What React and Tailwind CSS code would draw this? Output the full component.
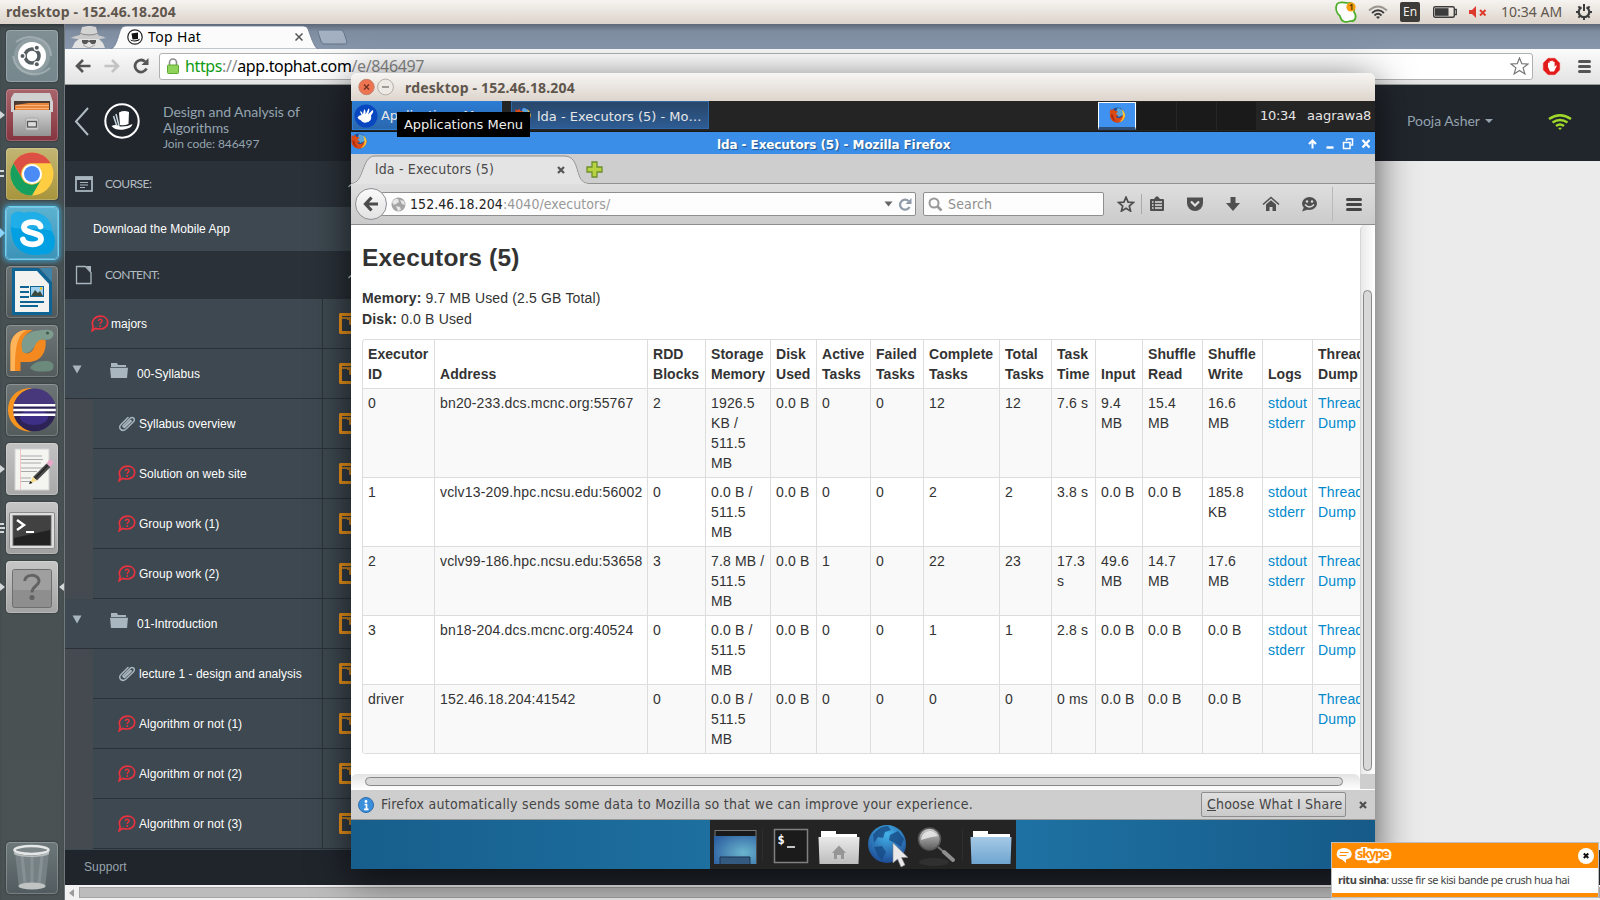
import React from "react";

/* ---------- Ubuntu top panel ---------- */
function TopPanel() {
  return (
    <div className="flex h-6 shrink-0 items-center bg-linear-to-b from-[#f6f4f1] to-[#dcd4cb] font-['Noto_Sans',sans-serif]">
      <div className="ml-[6px] w-[1326px] text-[14px] leading-6 font-bold tracking-[0.15px] whitespace-nowrap text-[#5f564d]">rdesktop - 152.46.18.204</div>
      <svg className="h-6 w-[32px] shrink-0" viewBox="0 0 32 24">
        <path d="M5 4 C8 1 12 3 16 3 C22 2 23 8 22 12 C25 16 24 22 18 21 C14 23 9 22 8 16 C4 13 3 8 5 4Z" fill="#fff" stroke="#4fae2a" strokeWidth="1.7" />
        <circle cx="19" cy="7" r="4.6" fill="#f79c0b" />
        <text x="17" y="10" fontSize="8" fontWeight="bold" fill="#5a3a00">1</text>
      </svg>
      <svg className="ml-[4px] h-6 w-[20px] shrink-0" viewBox="0 0 20 24" fill="none">
        <path d="M1 10.5 Q10 2.500 19 10.5" stroke="#9b9790" strokeWidth="1.800" />
        <path d="M4 13 Q10 7.500 16 13" stroke="#3c3c3c" strokeWidth="1.800" />
        <path d="M6.500 15.500 Q10 12 13.500 15.500" stroke="#3c3c3c" strokeWidth="1.800" />
        <path d="M8 17 Q10 15.500 12 17 L10 19Z" fill="#3c3c3c" />
      </svg>
      <div className="ml-[12px] h-5 w-5 shrink-0 rounded-[2px] bg-[#3c3b38] text-center text-[12px] leading-5 text-[#f3efea]">En</div>
      <svg className="ml-[13px] h-6 w-[24px] shrink-0" viewBox="0 0 24 24">
        <rect x="0.700" y="6.700" width="20.600" height="10.600" rx="1.500" fill="none" stroke="#3c3c3c" strokeWidth="1.400" />
        <rect x="2" y="8.200" width="13.500" height="7.600" fill="#3c3c3c" />
        <path d="M22 9.500h1.300v5H22" fill="none" stroke="#3c3c3c" strokeWidth="1.300" />
      </svg>
      <svg className="ml-[12px] h-6 w-[18px] shrink-0" viewBox="0 0 18 24">
        <path d="M0 10h3l4-4v12l-4-4H0z" fill="#dd3b2e" />
        <path d="M11 10l5.500 5.500M16.500 10L11 15.500" stroke="#dd3b2e" strokeWidth="2" />
      </svg>
      <div className="ml-[14px] w-[74px] shrink-0 text-[14px] leading-6 tracking-[0.02px] whitespace-nowrap text-[#5f564d]">10:34 AM</div>
      <svg className="h-6 w-[18px] shrink-0" viewBox="0 0 18 24" fill="none" stroke="#3c3c3c">
        <path d="M6.500 7.200A5.300 5.300 0 1 0 11.500 7.200" strokeWidth="2.200" />
        <path d="M9 4v7" strokeWidth="2" />
        <path d="M1 12h3M14 12h3M9 17v3M3.400 6.400l2 2M14.600 6.400l-2 2M3.400 17.600l2-2M14.600 17.600l-2-2" strokeWidth="2" />
      </svg>
    </div>
  );
}

/* ---------- Unity launcher ---------- */
function Tile({ className = "", children, left, right }) {
  return (
    <div className="relative flex w-[64px] shrink-0 pl-[6px]">
      {left === 1 && <svg className="absolute top-[21px] left-0 h-[10px] w-[5px]" viewBox="0 0 5 10"><path d="M0 1l5 4-5 4z" fill="#d3d7d7" /></svg>}
      {left === 2 && <svg className="absolute top-[21px] left-0 h-[10px] w-[5px]" viewBox="0 0 5 10"><path d="M0 2h4M0 7h4" stroke="#d3d7d7" strokeWidth="2" /></svg>}
      {left === 3 && <svg className="absolute top-[20px] left-0 h-[12px] w-[5px]" viewBox="0 0 5 12"><path d="M0 2h4M0 6h5M0 10h4" stroke="#d3d7d7" strokeWidth="2" /></svg>}
      {left === 4 && <svg className="absolute top-[20px] left-0 h-[12px] w-[5px]" viewBox="0 0 5 12"><path d="M0 1l5 5-5 5z" fill="#8bd4f7" /></svg>}
      <div className={"h-[52px] w-[52px] overflow-hidden rounded-[4px] " + className}>
        <svg className="h-[52px] w-[52px]" viewBox="0 0 52 52">
          {children}
          <rect x=".5" y=".5" width="51" height="51" rx="3.500" fill="none" stroke="#fff" strokeOpacity=".22" />
        </svg>
      </div>
      {right && <svg className="absolute top-[21px] right-0 h-[10px] w-[5px]" viewBox="0 0 5 10"><path d="M5 1L0 5l5 4z" fill="#d3d7d7" /></svg>}
    </div>
  );
}

function Launcher() {
  return (
    <div className="flex w-[65px] shrink-0 flex-col justify-between border-r border-[#70787b] bg-linear-to-b from-[#454f52] to-[#4b5254] pt-[6px] pb-[6px] shadow-[inset_0_4px_4px_-2px_rgba(0,0,0,0.35)]">
      <div className="flex flex-col gap-[7px]">
        <Tile className="bg-linear-to-b from-[#7f8f94] to-[#76888d] shadow-[0_0_2px_rgba(0,0,0,0.5)]">
          <circle cx="26" cy="26" r="18" fill="#a3b0b4" opacity=".5" />
          <path d="M10 12C24 2 44 8 45 26M44 38C30 50 10 44 7 26" stroke="#b5c0c3" strokeWidth="2" fill="none" opacity=".6" />
          <circle cx="26" cy="26" r="14" fill="#fff" />
          <circle cx="26" cy="26" r="7" fill="none" stroke="#555e61" strokeWidth="3.600" />
          <circle cx="16.500" cy="26" r="3.200" fill="#fff" /><circle cx="30.800" cy="17.800" r="3.200" fill="#fff" /><circle cx="30.800" cy="34.200" r="3.200" fill="#fff" />
          <circle cx="16.500" cy="26" r="2" fill="#555e61" /><circle cx="30.800" cy="17.800" r="2" fill="#555e61" /><circle cx="30.800" cy="34.200" r="2" fill="#555e61" />
        </Tile>
        <Tile left={1} className="bg-linear-to-b from-[#a9646b] to-[#85343f] shadow-[0_0_2px_rgba(0,0,0,0.5)]">
          <defs><linearGradient id="cab" x2="0" y2="1"><stop stopColor="#d2d2d2" /><stop offset="1" stopColor="#949494" /></linearGradient></defs>
          <path d="M8 4h36l3 9v10H5V9z" fill="#d0d0d0" />
          <path d="M8 12h36v10H8z" fill="#4a3a34" />
          <path d="M9 16l14-2h20v8H9z" fill="#e8843c" /><path d="M10 16.500h33M10 19.500h33" stroke="#fbc48a" strokeWidth=".8" />
          <rect x="7" y="21" width="38" height="26" rx="1" fill="url(#cab)" />
          <rect x="19.500" y="29" width="13" height="12" rx="2" fill="#cfcfcf" stroke="#a8a8a8" />
          <rect x="21.500" y="32.500" width="9" height="5.500" fill="#ddd" stroke="#555" strokeWidth="1.300" />
        </Tile>
        <Tile left={2} className="bg-linear-to-b from-[#c3b674] to-[#a8943a] shadow-[0_0_2px_rgba(0,0,0,0.5)]">
          <circle cx="26" cy="26" r="21.500" fill="#ffcd42" />
          <path d="M7.400 15.200A21.500 21.500 0 0 1 44.600 15.200H26A10.800 10.800 0 0 0 16.600 31.400z" fill="#dd5044" />
          <path d="M7.400 15.200A21.500 21.500 0 0 0 26 47.500L35.300 31.400A10.800 10.800 0 0 1 16.600 31.400z" fill="#17a05d" />
          <circle cx="26" cy="26" r="10" fill="#fff" /><circle cx="26" cy="26" r="8" fill="#4b8bf5" />
        </Tile>
        <Tile left={4} className="bg-linear-to-b from-[#5cb2d0] to-[#3b93b8] shadow-[0_0_0_1px_#6fd0f5,0_0_5px_3px_rgba(60,185,240,0.6)]">
          <path d="M5 13C4 5 12 3 18 6C33 2 46 11 46 24C52 34 48 49 38 47C22 51 7 43 6 28C4 22 5 17 5 13z" fill="#00a0e2" />
          <path d="M5 13C4 5 12 3 18 6C33 2 46 11 46 24C30 20 18 24 5 20z" fill="#3fbcf0" opacity=".5" />
          <path d="M34.500 19.500C33 13.500 18 13.500 18 20.500C18 27 35 24.500 35 32C35 39 19 39 17 32.500" fill="none" stroke="#fff" strokeWidth="5.800" strokeLinecap="round" />
        </Tile>
        <Tile className="bg-linear-to-b from-[#6a7274] to-[#50585a] shadow-[0_0_2px_rgba(0,0,0,0.5)]">
          <path d="M6 2h27l13 14v33H6z" fill="#0f6496" /><path d="M34 2h12v14z" fill="#3d83aa" />
          <path d="M9 5h22l12 13v28H9z" fill="#f2f2f0" />
          <path d="M14 21h9M14 26h9M14 31h9M14 36h24M14 40h18" stroke="#0f6496" strokeWidth="1.800" />
          <rect x="24.500" y="20.500" width="13" height="10" fill="#9fd0ee" stroke="#0f6496" /><path d="M25 30l4-6 3 3 2-2 3 5z" fill="#3a4a3c" /><circle cx="35" cy="22.500" r="1.200" fill="#f5c400" />
        </Tile>
        <Tile className="bg-linear-to-b from-[#6d7577] to-[#535b5d] shadow-[0_0_2px_rgba(0,0,0,0.5)]">
          <path d="M4.500 46V22C4.500 11 12 5 21 5H27C19 9 15 15 16 22C16 29 22 30 26 26C29 23 28 18 32 15.500C35 13.500 37 14 39.500 15C41 28 34 37 22 37H14.500V46z" fill="#f4891f" />
          <path d="M4.500 46V22C4.500 11 12 5 21 5C12 10 9 18 9 46z" fill="#ffb45a" />
          <path d="M16 24C14 13 21 6 33 5.500C40 4 47.500 4 47.500 9C47.500 14 42 15.500 37 14.500C28 14 30 27 20 28C17 28 16 27 16 24z" fill="#7d9c8d" />
          <circle cx="41.500" cy="8" r="1.600" fill="#465a50" />
          <path d="M24 43C27 38 31 36.500 38 36C45 35.500 48 38 47.500 42C47 46 43 46.500 37 46.500C31 46.500 27 46 24 43z" fill="#6b8a7c" />
        </Tile>
        <Tile className="bg-linear-to-b from-[#6d7577] to-[#535b5d] shadow-[0_0_2px_rgba(0,0,0,0.5)]">
          <path d="M26 4C10 4 2 14 2 26C2 38 12 48 25 47.500C13 43 8 35 8 26C8 16 14 7 26 4z" fill="#f7941e" />
          <circle cx="28.500" cy="26" r="21.300" fill="#2c2255" /><path d="M8 20A21.300 21.300 0 0 1 49 20z" fill="#4d3f85" opacity=".8" /><ellipse cx="28" cy="33" rx="14" ry="8" fill="#44349a" opacity=".7" />
          <path d="M7.700 21.200h41.600M7.200 26h42.600M7.700 30.800h41.600" stroke="#fff" strokeWidth="2.400" />
        </Tile>
        <Tile left={1} className="bg-linear-to-b from-[#c2c2c2] to-[#a8a8a8] shadow-[0_0_2px_rgba(0,0,0,0.5)]">
          <rect x="9" y="6" width="34" height="41" fill="#f4f4f1" stroke="#d2d2d2" />
          <path d="M14.500 6v41" stroke="#f0b0b0" strokeWidth=".7" />
          <path d="M15 13h21M15 16.500h22M15 20h20M15 25h22M15 28.500h16M15 35h10M15 38.500h9" stroke="#a9a9a9" strokeWidth="1.100" />
          <path d="M27 34L40.500 20.500L44.500 24L31 37.500z" fill="#4a4a4a" /><path d="M29 35.500L42 22" stroke="#222" strokeWidth="1.200" />
          <path d="M40.500 20.500l2.500-3.500q3.500-1 4.500 2.500l-3 4.500z" fill="#e9a6c8" /><path d="M27 34l4 3.500-7.500 3z" fill="#f1d985" /><path d="M23 41l1.300-3 2.200 2z" fill="#111" />
        </Tile>
        <Tile left={3} className="bg-linear-to-b from-[#c6c6c6] to-[#a0a0a0] shadow-[0_0_2px_rgba(0,0,0,0.5)]">
          <rect x="3.500" y="10.500" width="45" height="36" rx="1.500" fill="#dedede" stroke="#8a8a8a" />
          <rect x="7" y="13.500" width="38" height="30" fill="#222" stroke="#777" />
          <path d="M8 14h36v14L8 36z" fill="#4a4a4a" opacity=".8" />
          <path d="M11 18l7 5-7 5" fill="none" stroke="#fff" strokeWidth="2.400" /><path d="M20 30h8" stroke="#fff" strokeWidth="2.200" />
        </Tile>
        <Tile left={1} right className="bg-linear-to-b from-[#c6c6c6] to-[#a3a3a3] shadow-[0_0_2px_rgba(0,0,0,0.5)]">
          <rect x="6.500" y="8.500" width="39" height="38" rx="2" fill="#8e8e8e" stroke="#6e6e6e" />
          <path d="M7 9h38v20H7z" fill="#a6a6a6" opacity=".7" />
          <path d="M19 20C18 13 33 12 33 20C33 25 26 25 26 31.500" fill="none" stroke="#636363" strokeWidth="3" /><circle cx="26" cy="36.500" r="2.600" fill="#636363" />
        </Tile>
      </div>
      <Tile className="bg-linear-to-b from-[#6c777a] to-[#525c60] shadow-[0_0_2px_rgba(0,0,0,0.5)]">
        <path d="M9 10h34L39 46H13z" fill="#7f8a8d" opacity=".75" />
        <path d="M16 14l3 28M26 14v28M36 14l-3 28" stroke="#a7b0b2" strokeWidth="3" opacity=".35" />
        <ellipse cx="26" cy="44" rx="13.500" ry="3.500" fill="#bfc4c2" />
        <ellipse cx="25.500" cy="8" rx="17" ry="4" fill="#7c8587" stroke="#e5e7e6" strokeWidth="2.600" />
        <path d="M8 9c3 6 32 6 35 0v3c-4 4-31 4-35 0z" fill="#c5cac9" opacity=".8" />
      </Tile>
    </div>
  );
}

/* ---------- Chrome ---------- */
function ChromeTabs() {
  return (
    <div className="flex h-[25px] shrink-0 bg-linear-to-b from-[#5d6979] via-[#7f8da1] via-30% to-[#8897ab]">
      <svg className="ml-[5px] h-[25px] w-[38px] shrink-0" viewBox="0 0 38 25">
        <path d="M12 3l6-1h3l5 1 2 8H10z" fill="#d3d3d3" />
        <path d="M0.500 14Q19 6 36 14Q19 18 0.500 14z" fill="#c9c9c9" />
        <path d="M9 9Q19 13 29 9" stroke="#8b8b8b" fill="none" />
        <path d="M2 24L5 18 9 15h20l4 4 2 5z" fill="#e2e2e2" />
        <path d="M12 16h6l1 1 1-1h6v2c-1 3-5 3-6 0h-2c-1 3-5 3-6 0z" fill="#555" />
        <path d="M13 21l6 3 6-3" stroke="#a5a5a5" fill="none" />
      </svg>
      <div className="relative -ml-[1px] flex h-[25px] w-[211px] shrink-0 items-center">
        <svg className="absolute inset-0 h-[25px] w-[211px]" viewBox="0 0 211 25">
          <path d="M4 25C10 23 12 8 14 5Q15 2 19 2H196Q200 2 201 5C203 10 207 24 211 25z" fill="#fbfbfb" stroke="#68768a" strokeWidth=".8" />
        </svg>
        <svg className="relative ml-[20px] h-[16px] w-[16px] shrink-0" viewBox="0 0 16 16">
          <circle cx="8" cy="8" r="7.200" fill="#fff" stroke="#222" strokeWidth="1.200" /><path d="M4.500 4.500l6.500-1v6.500l-5.500.5zM3 10.500Q8 13 13 9.500L12 11.500Q8 13 4.500 12z" fill="#111" />
        </svg>
        <div className="relative ml-[5px] w-[147px] shrink-0 font-['Noto_Sans',sans-serif] text-[14px] leading-[25px] tracking-[0.35px] text-black">Top Hat</div>
        <svg className="relative h-2 w-2 shrink-0" viewBox="0 0 8 8"><path d="M.5 .5l7 7M7.500 .5l-7 7" stroke="#555" strokeWidth="1.500" /></svg>
      </div>
      <svg className="-ml-[3px] h-[25px] w-[34px] shrink-0" viewBox="0 0 34 25"><path d="M4 6h22q2 0 3 3l3 9q0 2-2 2H9q-2 0-3-3L3 8q0-2 1-2z" fill="#a2b0c2" stroke="#66758a" /></svg>
    </div>
  );
}

function ChromeToolbar() {
  return (
    <div className="flex h-[36px] shrink-0 items-center border-b border-[#9b9b9b] bg-linear-to-b from-[#fbfbfb] to-[#e3e3e3] pb-[1px]">
      <svg className="ml-[10px] h-4 w-[16px] shrink-0" viewBox="0 0 16 16" fill="none" stroke="#555" strokeWidth="2.600"><path d="M8 2L2 8l6 6M2 8h13.500" /></svg>
      <svg className="ml-[13px] h-4 w-[16px] shrink-0" viewBox="0 0 16 16" fill="none" stroke="#c3c3c3" strokeWidth="2.600"><path d="M8 2l6 6-6 6M14 8H.5" /></svg>
      <svg className="ml-[13px] h-4 w-[16px] shrink-0" viewBox="0 0 16 16" fill="none" stroke="#555" strokeWidth="2.800"><path d="M13.500 10.500A6 6 0 1 1 12 3.500" /><path d="M15.500 0v7h-7z" fill="#555" stroke="none" /></svg>
      <div className="ml-[10px] flex h-[27px] w-[1374px] shrink-0 items-center rounded-[3px] border border-[#b0b0b0] bg-white">
        <svg className="ml-[7px] h-[16px] w-[12px] shrink-0" viewBox="0 0 12 16"><path d="M2.500 8V4.500a3.500 3.500 0 0 1 7 0V8" fill="none" stroke="#8b8b8b" strokeWidth="1.600" /><rect x=".5" y="7" width="11" height="8.500" rx="1" fill="#8fd35a" stroke="#5fa834" /></svg>
        <div className="ml-[6px] w-[1325px] font-['Noto_Sans',sans-serif] text-[16px] leading-6 tracking-[-0.37px] whitespace-nowrap text-[#8a8a8a]"><span className="text-[#0f9a13]">https</span>://<span className="text-black">app.tophat.com</span>/e/846497</div>
        <svg className="h-[18px] w-[19px] shrink-0" viewBox="0 0 19 18"><path d="M9.500 1l2.300 5.700 6.200.3-4.900 3.900 1.800 6-5.400-3.500-5.400 3.500 1.800-6L1 7l6.200-.3z" fill="#fff" stroke="#777" strokeWidth="1.200" /></svg>
      </div>
      <svg className="ml-[9px] h-[19px] w-[19px] shrink-0" viewBox="0 0 19 19">
        <path d="M6 1h7l5 5v7l-5 5H6l-5-5V6z" fill="#e21b1b" stroke="#f7b0b0" strokeWidth=".6" />
        <path d="M6 10V6q1-1 1.500 0V4.500q1-1.200 1.700 0V4q1-1.200 1.700 0v1q1-1 1.700 0v5l1-1.500q1.200-.5 1 .8L12 14.500H8z" fill="#fff" />
      </svg>
      <div className="ml-[17px] flex w-[13px] shrink-0 flex-col gap-[2px]"><i className="h-[3px] rounded-sm bg-[#555]" /><i className="h-[3px] rounded-sm bg-[#555]" /><i className="h-[3px] rounded-sm bg-[#555]" /></div>
    </div>
  );
}

function QuestionIcon() {
  return (
    <svg className="h-[17px] w-[18px] shrink-0" viewBox="0 0 18 17">
      <path d="M1.200 15.800L2.200 11.500C-.5 6 4 1.200 9.500 1.200C14 1.200 16.700 4 16.700 7.500C16.700 11.500 13 14 9 14C7 14 5.500 13.800 4.500 13.400z" fill="none" stroke="#e8323f" strokeWidth="1.700" />
      <path d="M7.400 6C7.400 3.700 11.200 3.900 11 6C10.900 7.400 9.200 7.200 9.200 9" fill="none" stroke="#e8323f" strokeWidth="1.500" /><circle cx="9.200" cy="11" r="1" fill="#e8323f" />
    </svg>
  );
}
function ClipIcon() {
  return (
    <svg className="h-[17px] w-[18px] shrink-0" viewBox="0 0 18 17" fill="none" stroke="#a9b6bf" strokeWidth="1.500">
      <path d="M12.500 5.500L6.500 11.500C5.500 12.500 4.300 11.300 5.300 10.300L12 3.500C14.500 1 18 4 15.500 6.700L8 14C4 17.500-.5 13 3 9.500L10 2.500" strokeLinecap="round" /><path d="M6 13L13.800 5.500" />
    </svg>
  );
}
function SideRow({ kind, text }) {
  const sub = kind === "q" || kind === "clip";
  return (
    <div className="flex h-[50px] shrink-0">
      {sub && <div className="w-[28px] shrink-0 bg-[#454a50]" />}
      <div className="flex flex-1 items-center border-b border-[#2a3239]">
        {kind === "top" && <div className="ml-[26px] flex w-[19px]"><QuestionIcon /></div>}
        {kind === "folder" && (
          <>
            <svg className="mt-[-8px] ml-[7px] h-[9px] w-[10px]" viewBox="0 0 10 9"><path d="M.5 .5h9l-4.500 8z" fill="#a9b6bf" /></svg>
            <svg className="mt-[-6px] ml-[28px] h-[15px] w-[18px]" viewBox="0 0 18 15"><path d="M1 0h6l1 2h8v2H1z" fill="#a9b6bf" /><path d="M0 4.800h18L17 15H1z" fill="#a9b6bf" /></svg>
          </>
        )}
        {sub && <div className="ml-[25px] flex w-[20px]">{kind === "q" ? <QuestionIcon /> : <ClipIcon />}</div>}
        <div className={"pt-px tracking-[0.02px] whitespace-nowrap text-white " + (kind === "folder" ? "ml-[9px]" : "ml-[1px]")}>{text}</div>
      </div>
      <div className="w-[29px] shrink-0 border-b border-l border-[#2a3239] pt-[14px] pl-[16px]">
        <div className="h-[21px] w-[21px] rounded-l-[2px] border-[3px] border-r-0 border-[#f0951a] bg-[#333d46] pt-px">
          <svg className="h-[14px] w-[18px]" viewBox="0 0 18 14"><path d="M0 1h6v2M8 0v7h3V0" stroke="#f0951a" strokeWidth="1.600" fill="none" /></svg>
        </div>
      </div>
    </div>
  );
}

const rows = [
  ["top", "majors"], ["folder", "00-Syllabus"], ["clip", "Syllabus overview"], ["q", "Solution on web site"], ["q", "Group work (1)"], ["q", "Group work (2)"],
  ["folder", "01-Introduction"], ["clip", "lecture 1 - design and analysis"], ["q", "Algorithm or not (1)"], ["q", "Algorithm or not (2)"], ["q", "Algorithm or not (3)"],
];

const Caret = () => <svg className="mt-[3px] ml-auto h-[6px] w-[3px]" viewBox="0 0 3 6"><path d="M3 1.500L.5 4" stroke="#c6d2dc" strokeWidth="1.200" fill="none" /></svg>;

function Chrome() {
  return (
    <div className="flex w-[1535px] shrink-0 flex-col">
      <ChromeTabs />
      <ChromeToolbar />
      <div className="flex h-[76px] shrink-0 bg-[#21262d] font-['Lato',sans-serif]">
        <svg className="mt-[22px] ml-[9px] h-[29px] w-[15px] shrink-0" viewBox="0 0 15 29"><path d="M14 1L2 14.500L14 28" fill="none" stroke="#b0bac1" strokeWidth="2" /></svg>
        <svg className="mt-[18px] ml-[15px] h-[36px] w-[36px] shrink-0" viewBox="0 0 36 36">
          <circle cx="18" cy="18" r="16.700" fill="none" stroke="#fff" strokeWidth="2" />
          <path d="M15 9.500Q20 7 25 9L24.500 21Q20 23 16 22z" fill="#fff" /><path d="M12 11l3 12M9.500 13l3 9" stroke="#c9d8df" strokeWidth="1.500" />
          <path d="M7.500 23Q12 21 16 23.500Q23 24 28.500 21Q28 25 20 26.500Q12 28 7.500 23z" fill="#fff" />
        </svg>
        <div className="mt-[19px] ml-[23px] w-[1244px] shrink-0 text-[14px] leading-4 tracking-[-0.06px] text-[#94a3ae]">Design and Analysis of<br />Algorithms<div className="text-[12px] leading-[16px] tracking-[-0.08px]">Join code: 846497</div></div>
        <div className="mt-[27px] flex w-[141px] shrink-0 items-center self-start text-[14px] leading-[18px] tracking-[-0.03px] text-[#94a3ae]">Pooja Asher<svg className="ml-[5px] h-1 w-2" viewBox="0 0 8 4"><path d="M0 0h8L4 4z" fill="#94a3ae" /></svg></div>
        <svg className="mt-[28px] h-[18px] w-[24px] shrink-0" viewBox="0 0 24 18" fill="none" stroke="#a0d82a" strokeWidth="2.600">
          <path d="M1 6Q12-1.500 23 6" /><path d="M4.500 9.500Q12 4.500 19.500 9.500" /><path d="M8 13Q12 10 16 13" /><path d="M10 15q2-1.200 4 0l-2 2z" fill="#a0d82a" stroke="none" />
        </svg>
      </div>
      <div className="flex h-[689px] shrink-0 bg-[#ebebeb]">
        <div className="flex w-[286px] shrink-0 flex-col overflow-hidden bg-[#3d4850] font-['Liberation_Sans',Arial,sans-serif] text-[12px]">
          <div className="flex h-[46px] shrink-0 items-center bg-[#2a3138] font-['Lato',sans-serif] text-[12px] tracking-[-0.55px] text-[#b4bdc3]">
            <svg className="ml-[10px] h-[16px] w-[18px]" viewBox="0 0 18 16"><rect x="1" y="1" width="16" height="14" fill="none" stroke="#a9b6bf" strokeWidth="1.800" /><path d="M1 2.500h16" stroke="#a9b6bf" strokeWidth="3" /><path d="M5 6.500h8M5 9h8M5 11.500h5" stroke="#a9b6bf" strokeWidth="1.100" /></svg>
            <span className="ml-[12px]">COURSE:</span><Caret />
          </div>
          <div className="flex h-[44px] shrink-0 items-center pl-[28px] tracking-[0.04px] text-white">Download the Mobile App</div>
          <div className="flex h-[48px] shrink-0 items-center bg-[#2a3138] font-['Lato',sans-serif] text-[12px] tracking-[-0.65px] text-[#b4bdc3]">
            <svg className="ml-[10px] h-[20px] w-[18px]" viewBox="0 0 18 20"><path d="M1.500 1.500h9l5.500 6v11H1.500z" fill="none" stroke="#a9b6bf" strokeWidth="1.300" /><path d="M11 1h5v6z" fill="#a9b6bf" /></svg>
            <span className="ml-[12px]">CONTENT:</span><Caret />
          </div>
          <div className="flex flex-col">{rows.map(([k, t]) => <SideRow key={t} kind={k} text={t} />)}</div>
        </div>
      </div>
      <div className="flex h-[35px] shrink-0 items-center bg-[#20252c] pb-px pl-[19px] font-['Liberation_Sans',Arial,sans-serif] text-[12px] tracking-[0.1px] text-[#98a4ab]">Support</div>
      <div className="flex h-[15px] shrink-0 items-center bg-[#f1f1f1]">
        <svg className="ml-[4px] h-2 w-[5px]" viewBox="0 0 5 8"><path d="M5 0v8L0 4z" fill="#9a9a9a" /></svg>
        <div className="ml-[5px] h-[11px] flex-1 border border-[#a3a3a3] bg-[#bcbcbc]" />
      </div>
    </div>
  );
}

/* ---------- Remote desktop window ---------- */
function Firefox({ className }) {
  return (
    <svg className={className} viewBox="0 0 16 16">
      <circle cx="8" cy="8" r="7.500" fill="#1f4d96" /><path d="M8 1a6 6 0 0 1 6 7l-5 2-3-4z" fill="#58a6dc" />
      <path d="M.6 2l2 1.500L4 1.500 5.500 4Q8 3.500 8.500 5L6.500 6.500Q7 8 9 8Q8 10 6 9.500Q8 12 11 10.500Q12.500 9.500 13.500 8L15.600 7Q15.500 15.500 8 15.700Q.5 15 .4 8Q.4 4 .6 2z" fill="#dc4a16" />
      <path d="M1.500 7Q1.500 13 7 14.500Q3.500 11.500 3.500 8z" fill="#a8260c" />
      <path d="M12 2Q15.800 4.500 15.600 9Q14.500 14.500 9.500 15.300Q13 13 13.500 9Q13.700 5 12 2z" fill="#f7c438" />
    </svg>
  );
}

const th = "Executor|ID,Address,RDD|Blocks,Storage|Memory,Disk|Used,Active|Tasks,Failed|Tasks,Complete|Tasks,Total|Tasks,Task|Time,Input,Shuffle|Read,Shuffle|Write,Logs,Thread|Dump".split(",");
const data = [
  ["0", "bn20-233.dcs.mcnc.org:55767", "2", "1926.5|KB /|511.5|MB", "0.0 B", "0", "0", "12", "12", "7.6 s", "9.4|MB", "15.4|MB", "16.6|MB", "stdout|stderr", "Thread|Dump"],
  ["1", "vclv13-209.hpc.ncsu.edu:56002", "0", "0.0 B /|511.5|MB", "0.0 B", "0", "0", "2", "2", "3.8 s", "0.0 B", "0.0 B", "185.8|KB", "stdout|stderr", "Thread|Dump"],
  ["2", "vclv99-186.hpc.ncsu.edu:53658", "3", "7.8 MB /|511.5|MB", "0.0 B", "1", "0", "22", "23", "17.3|s", "49.6|MB", "14.7|MB", "17.6|MB", "stdout|stderr", "Thread|Dump"],
  ["3", "bn18-204.dcs.mcnc.org:40524", "0", "0.0 B /|511.5|MB", "0.0 B", "0", "0", "1", "1", "2.8 s", "0.0 B", "0.0 B", "0.0 B", "stdout|stderr", "Thread|Dump"],
  ["driver", "152.46.18.204:41542", "0", "0.0 B /|511.5|MB", "0.0 B", "0", "0", "0", "0", "0 ms", "0.0 B", "0.0 B", "0.0 B", "", "Thread|Dump"],
];
const cols = "grid grid-cols-[72px_213px_58px_65px_46px_54px_53px_76px_52px_44px_47px_60px_60px_50px_60px]";
const Lines = ({ t }) => t.split("|").map((l, i) => <div key={i}>{l}</div>);

function SparkPage() {
  return (
    <div className="h-[549px] w-[1009px] shrink-0 overflow-hidden bg-white pl-[11px] font-['Liberation_Sans',Arial,sans-serif] text-[14px] leading-5 tracking-[0.16px] text-[#333]">
      <h3 className="mt-[13px] text-[24.5px] leading-10 font-bold tracking-[0.18px]">Executors (5)</h3>
      <div className="mt-[10px]"><b>Memory:</b> 9.7 MB Used (2.5 GB Total)</div>
      <div className="mt-px"><b>Disk:</b> 0.0 B Used</div>
      <div className="mt-[10px] w-[1037px] rounded-[4px] border-b border-[#ddd]">
        <div className={cols + " h-[49px] items-stretch font-bold tracking-[0.05px]"}>
          {th.map((t, i) => <div key={i} className={"flex flex-col justify-end border-t border-l border-[#ddd] px-[5px] py-1 whitespace-nowrap " + (i === 0 ? "rounded-tl-[4px]" : "")}><Lines t={t} /></div>)}
        </div>
        {data.map((r, ri) => (
          <div key={ri} className={cols + (ri % 2 ? "" : " bg-[#f9f9f9]")}>
            {r.map((t, i) => <div key={i} className={"border-t border-l border-[#ddd] px-[5px] py-1 whitespace-nowrap " + (i > 12 ? "text-[#0088cc]" : "")}><Lines t={t} /></div>)}
          </div>
        ))}
      </div>
    </div>
  );
}

function XfcePanel() {
  return (
    <div className="relative flex h-[31px] shrink-0 border-b border-[#181818] bg-[#242424] font-['DejaVu_Sans',sans-serif] text-[13px] text-[#e6e6e6]">
      <div className="ml-px flex h-[29px] w-[150px] shrink-0 items-center border border-[#2f7fd6] bg-linear-to-b from-[#2b7bd3] to-[#2a68ae]">
        <svg className="ml-[1px] h-[24px] w-[24px] shrink-0" viewBox="0 0 24 24"><circle cx="12" cy="12" r="11.500" fill="#0847bf" /><path d="M3.500 13.500Q4.500 11 7.500 11L6 7.500Q7.500 6.500 9 10.500L10 5.500Q11.800 5 11.500 10.500L14.500 4.500Q16.500 4.500 14 10.500L18.500 6Q20.500 7 17 11.500Q18.500 17.500 12 18.500Q9 19.500 6.500 16Q4.500 15.500 3.500 13.500z" fill="#fff" /></svg>
        <span className="ml-[3px] tracking-[-0.1px] whitespace-nowrap">Applications Menu</span>
      </div>
      <div className="ml-[9px] flex h-[28px] w-[198px] shrink-0 items-center border border-[#2f68a8] bg-linear-to-b from-[#284668] to-[#2d5c94]">
        <Firefox className="ml-[3px] h-[16px] w-[16px]" /><span className="ml-[6px] pt-[4px] whitespace-nowrap">lda - Executors (5) - Mo…</span>
      </div>
      <div className="mt-px ml-[389px] flex h-[28px] w-[158px] shrink-0 gap-px bg-[#262626]">
        <div className="flex w-[38px] items-center justify-center border border-b-[3px] border-white border-b-[#2d4f7a] bg-[#3f92ef]"><Firefox className="h-[16px] w-[17px]" /></div>
        <div className="flex-1 bg-[#1a1a1a]" /><div className="flex-1 bg-[#1a1a1a]" /><div className="flex-1 bg-[#1a1a1a]" />
      </div>
      <div className="ml-[4px] w-[47px] shrink-0 leading-[30px] tracking-[-0.3px]">10:34</div>
      <div className="w-[68px] shrink-0 leading-[30px]">aagrawa8</div>
      <div className="absolute top-[11px] left-[46px] z-10 h-[25px] w-[133px] bg-black text-center text-[13px] leading-[25px] whitespace-nowrap text-[#efefef]">Applications Menu</div>
    </div>
  );
}

const Sm = ({ className = "", children }) => <svg className={"h-[16px] w-[18px] shrink-0 " + className} viewBox="0 0 18 16">{children}</svg>;

function FirefoxChrome() {
  return (
    <>
      <div className="flex h-[22px] shrink-0 items-center bg-[#3a8ee8] font-['DejaVu_Sans',sans-serif] text-[12px] font-bold text-white">
        <Firefox className="-mt-1 h-[16px] w-[16px] shrink-0" />
        <div className="mt-[4px] ml-[350px] w-[591px] shrink-0 tracking-[-0.1px] whitespace-nowrap [text-shadow:1px_1px_1px_#1f5590]">lda - Executors (5) - Mozilla Firefox</div>
        <svg className="mt-[2px] h-[14px] w-[66px] shrink-0" viewBox="0 0 66 14" fill="none" stroke="#fff" strokeWidth="2">
          <path d="M4.500 11.500V4M1 7L4.500 3.500L8 7" /><path d="M18.500 10.500h7" strokeWidth="2.400" />
          <rect x="35.500" y="5.500" width="6.500" height="6" strokeWidth="1.500" /><path d="M38.500 4V2h6v6h-2" strokeWidth="1.500" />
          <path d="M54.500 3l7 7.500M61.500 3l-7 7.500" strokeWidth="2.300" />
        </svg>
      </div>
      <div className="relative flex h-[30px] shrink-0 items-center bg-[#cecece] font-['DejaVu_Sans_Condensed','DejaVu_Sans',sans-serif] text-[14px] text-[#4a4a4a]">
        <svg className="absolute inset-0 h-[30px] w-[1024px]" viewBox="0 0 1024 30">
          <path d="M0 29.500C14 29.500 10 2 24 2H213C231 2 222 29.500 238 29.500H1024V31H0z" fill="#e3e3e3" stroke="#919191" />
          <path d="M0 30V30C14 30 11 3 24 3H213C230 3 222 30 238 30z" fill="#e4e4e4" />
        </svg>
        <div className="relative ml-[24px] w-[182px] tracking-[0.18px]">lda - Executors (5)</div>
        <svg className="relative mt-px h-2 w-2" viewBox="0 0 8 8"><path d="M1 1l6 6M7 1L1 7" stroke="#555" strokeWidth="2.200" /></svg>
        <svg className="relative mt-px ml-[21px] h-[17px] w-[17px]" viewBox="0 0 17 17"><path d="M6 1h5v5h5v5h-5v5H6v-5H1V6h5z" fill="#b7d342" stroke="#6e8f2c" strokeWidth="1.300" /></svg>
      </div>
      <div className="flex h-[41px] shrink-0 items-center border-b border-[#8e8e8e] bg-linear-to-b from-[#dfdfdf] to-[#cbcbcb] font-['DejaVu_Sans_Condensed','DejaVu_Sans',sans-serif] text-[14px]">
        <div className="z-10 ml-[4px] flex h-8 w-8 shrink-0 items-center justify-center rounded-full border border-[#8c8f94] bg-linear-to-b from-[#fafafa] to-[#e2e2e2]">
          <svg className="h-4 w-4" viewBox="0 0 16 16" fill="none" stroke="#4b4b4b" strokeWidth="3.200"><path d="M8.500 1.500L2.500 8l6 6.500M2.500 8H15" /></svg>
        </div>
        <div className="-ml-[6px] flex h-[24px] w-[535px] shrink-0 items-center rounded-[2px] border border-[#8f8f8f] bg-[#fdfdfd]">
          <svg className="ml-[9px] h-[15px] w-[15px]" viewBox="0 0 15 15"><circle cx="7.500" cy="7.500" r="7" fill="#a5a5a5" /><path d="M1 5Q4 1 7 2L8 5 5 7 3 8zM9 3l4 1 1 4-3-1zM5 9l4 1 1 3-3 1z" fill="#e6e6e6" /></svg>
          <div className="ml-[4px] w-[474px] tracking-[0.06px] whitespace-nowrap text-[#999]"><span className="text-[#222]">152.46.18.204</span>:4040/executors/</div>
          <svg className="h-[6px] w-[9px]" viewBox="0 0 9 6"><path d="M.5 .5h8L4.500 5.500z" fill="#666" /></svg>
          <svg className="ml-[6px] h-[13px] w-[13px]" viewBox="0 0 13 13"><path d="M10.500 9A5 5 0 1 1 9.500 3" fill="none" stroke="#8e9aa8" strokeWidth="2.200" /><path d="M12.500 0v6h-6z" fill="#8e9aa8" /></svg>
        </div>
        <div className="ml-[7px] flex h-[24px] w-[181px] shrink-0 items-center rounded-[2px] border border-[#8f8f8f] bg-[#fdfdfd] text-[#8f8f8f]">
          <svg className="ml-[4px] h-[15px] w-[15px]" viewBox="0 0 15 15" fill="none" stroke="#999"><circle cx="6" cy="6" r="4.500" strokeWidth="2" /><path d="M9.500 9.500l4 4" strokeWidth="2.600" /></svg>
          <span className="ml-[5px] tracking-[0.15px]">Search</span>
        </div>
        <Sm className="ml-[13px]"><path d="M9 1.200l2.100 4.900 5.300.4-4.100 3.500 1.300 5.100L9 12.200l-4.600 2.900L5.700 10 1.600 6.500l5.300-.4z" fill="none" stroke="#4f4f4f" strokeWidth="1.700" /></Sm>
        <div className="ml-[6px] h-[20px] w-px bg-[#aaa]" />
        <Sm className="ml-[6px]"><path d="M3 3h3l2-2.500h2L12 3h3q1 0 1 1v10q0 1-1 1H3q-1 0-1-1V4q0-1 1-1z" fill="#4f4f4f" /><path d="M7 6h7M7 9h7M7 12h7M4 6h1.500M4 9h1.500M4 12h1.500" stroke="#e0e0e0" strokeWidth="1.500" /></Sm>
        <Sm className="ml-[20px]"><path d="M1 1.500h16V7a8 8 0 0 1-16 0z" fill="#4f4f4f" /><path d="M5 5.500l4 4 4-4" fill="none" stroke="#e0e0e0" strokeWidth="2.200" /></Sm>
        <Sm className="ml-[20px]"><path d="M6.500 1h5v6H16l-7 8-7-8h4.500z" fill="#4f4f4f" /></Sm>
        <Sm className="ml-[20px]"><path d="M1 8.500L9 1.500l8 7" fill="none" stroke="#4f4f4f" strokeWidth="1.600" /><path d="M4 8.500l5-4.300 5 4.300V15h-3.500v-4h-3v4H4z" fill="#4f4f4f" /></Sm>
        <Sm className="ml-[20px]"><ellipse cx="9.500" cy="7.500" rx="7.500" ry="6.500" fill="#4f4f4f" /><path d="M4 11l-2 4.500 6-2z" fill="#4f4f4f" /><circle cx="7" cy="5.500" r="1.200" fill="#ddd" /><circle cx="12" cy="5.500" r="1.200" fill="#ddd" /><path d="M5 8.500Q9.500 13.500 14 8.500" fill="none" stroke="#ddd" strokeWidth="1.400" /></Sm>
        <div className="ml-[14px] h-[34px] w-px bg-[#b9b9b9]" />
        <div className="ml-[13px] flex w-[16px] shrink-0 flex-col gap-[2px]"><i className="h-[3px] rounded-sm bg-[#444]" /><i className="h-[3px] rounded-sm bg-[#444]" /><i className="h-[3px] rounded-sm bg-[#444]" /></div>
      </div>
    </>
  );
}

function Dock() {
  return (
    <div className="flex h-[49px] shrink-0 justify-start bg-linear-to-r from-[#175e8c] via-[#2079ab] via-55% to-[#165a88]">
      <svg className="ml-[359px] h-[49px] w-[306px] bg-[#242424]" viewBox="0 0 306 49">
        <defs>
          <linearGradient id="fb" x2="0" y2="1"><stop stopColor="#a5c9e6" /><stop offset="1" stopColor="#6fa5d0" /></linearGradient>
          <linearGradient id="fg" x2="0" y2="1"><stop stopColor="#e9e9e9" /><stop offset="1" stopColor="#bdbdbd" /></linearGradient>
          <radialGradient id="ds" cx=".7" cy=".6" r=".8"><stop stopColor="#6bb6cd" /><stop offset="1" stopColor="#2f62a3" /></radialGradient>
          <radialGradient id="gl" cx=".5" cy=".25" r=".8"><stop stopColor="#42b2e8" /><stop offset="1" stopColor="#1c4590" /></radialGradient>
          <linearGradient id="mg" x2="0" y2="1"><stop stopColor="#cfcfcf" /><stop offset="1" stopColor="#5c5c5c" /></linearGradient>
        </defs>
        <path d="M52.500 9v32M252.500 9v32" stroke="#2e2e2e" />
        <rect x="5" y="10.500" width="41" height="33" fill="#191919" stroke="#777" /><rect x="4" y="16" width="42" height="28" fill="url(#ds)" />
        <path d="M10 44v-7h30v7" fill="#355a80" stroke="#1a3350" />
        <rect x="64.500" y="9.500" width="33" height="33" fill="#1b1b1b" stroke="#808080" strokeWidth="1.500" />
        <text x="67.500" y="24" fontFamily="DejaVu Sans Mono" fontWeight="bold" fontSize="12" fill="#fff">$</text><path d="M77 27h8" stroke="#fff" strokeWidth="1.500" />
        <path d="M111 14v-3h15v3h21v5h-36z" fill="#fff" /><path d="M108.500 17h41l-1 27h-39z" fill="url(#fg)" /><path d="M122 33l7-7.500 7 7.500h-2v6h-3v-4h-4v4h-3v-6z" fill="#969696" />
        <circle cx="177" cy="24" r="19" fill="url(#gl)" /><path d="M163 15q6-9 15-9l3 4-6 2-2 6-5-1-4 6zM180 15l8-4 6 8-3 8-6-4-6-3zM164 27l8-1 4 6-4 8-4-4z" fill="#174b86" opacity=".8" />
        <path d="M183 23v20l4.500-4 3.500 8 4-2-3.500-7.500h6.500z" fill="#e9e9e9" stroke="#888" strokeWidth=".6" />
        <ellipse cx="224" cy="42" rx="15" ry="4" fill="#303030" /><path d="M228 27l7 6" stroke="#777" strokeWidth="2" /><path d="M234 32l9 8" stroke="#8f8f8f" strokeWidth="4" strokeLinecap="round" /><circle cx="219.500" cy="19" r="11" fill="url(#mg)" stroke="#555" strokeWidth="1.500" /><path d="M211 20a9 9 0 0 1 17-4q-8 1-17 4z" fill="#ececec" opacity=".8" />
        <path d="M263 14v-3h15v3h22v6h-37z" fill="#fff" /><path d="M260.500 17h41l-1 27h-39z" fill="url(#fb)" />
      </svg>
    </div>
  );
}

function RemoteWindow() {
  return (
    <div className="absolute top-[73px] left-[351px] flex h-[796px] w-[1024px] flex-col rounded-t-[6px] bg-white shadow-[0_8px_40px_0_rgba(0,0,0,0.68)]">
      <div className="flex h-[28px] shrink-0 items-center rounded-t-[6px] bg-linear-to-b from-[#f7f5f3] to-[#ddd5cc]">
        <svg className="ml-[7px] h-[18px] w-[37px] shrink-0" viewBox="0 0 37 18">
          <circle cx="8.500" cy="9" r="7.700" fill="#ee7350" stroke="#c5826c" /><path d="M6 6.500l5 5M11 6.500l-5 5" stroke="#6b3222" strokeWidth="1.200" />
          <circle cx="27.500" cy="9" r="7.900" fill="#edeae5" stroke="#b5aea6" /><path d="M24 9h7" stroke="#77706a" strokeWidth="1.300" />
        </svg>
        <div className="ml-[10px] font-['Noto_Sans',sans-serif] text-[14px] font-bold tracking-[0.15px] whitespace-nowrap text-[#5f564d]">rdesktop - 152.46.18.204</div>
      </div>
      <XfcePanel />
      <FirefoxChrome />
      <div className="flex h-[549px] shrink-0">
        <SparkPage />
        <div className="flex w-[15px] flex-col rounded-t-[5px] border-l border-[#d5d5d5] bg-linear-to-r from-[#e9e9e9] to-white pt-[65px] pl-[2px]"><div className="h-[481px] w-[9px] rounded-[5px] border border-[#888] bg-[#d8d8d8]" /></div>
      </div>
      <div className="flex h-[16px] shrink-0">
        <div className="flex w-[1009px] items-center rounded-tl-[6px] rounded-tr-[6px] bg-linear-to-b from-[#e3e3e3] to-white pl-[14px]"><div className="mt-[-1px] h-[9px] w-[978px] rounded-[5px] border border-[#888] bg-[#d8d8d8]" /></div>
        <div className="h-[15px] flex-1 bg-[#cecece]" />
      </div>
      <div className="flex h-[30px] shrink-0 items-center border-b border-[#999] bg-[#cecece] font-['DejaVu_Sans_Condensed','DejaVu_Sans',sans-serif] text-[14px] text-[#444]">
        <svg className="ml-[7px] h-4 w-4 shrink-0" viewBox="0 0 16 16"><circle cx="8" cy="8" r="7.500" fill="#3c8fdb" stroke="#2b6cad" /><circle cx="8" cy="4.500" r="1.400" fill="#fff" /><path d="M6.500 7.500H8.500V12M6 12.300h4.500" stroke="#fff" strokeWidth="1.700" fill="none" /></svg>
        <div className="ml-[7px] w-[820px] shrink-0 tracking-[0.26px] whitespace-nowrap">Firefox automatically sends some data to Mozilla so that we can improve your experience.</div>
        <div className="h-[25px] w-[145px] shrink-0 rounded-[2px] border border-[#8d8d8d] bg-linear-to-b from-[#e0e0e0] to-[#cacaca] pl-[5px] leading-[23px] tracking-[0.2px] whitespace-nowrap"><u>C</u>hoose What I Share</div>
        <svg className="ml-[13px] h-2 w-2 shrink-0" viewBox="0 0 8 8"><path d="M1 1l6 6M7 1L1 7" stroke="#4f4f4f" strokeWidth="2.200" /></svg>
      </div>
      <Dock />
    </div>
  );
}

function SkypePopup() {
  return (
    <div className="absolute top-[842px] left-[1331px] flex h-[56px] w-[268px] flex-col border border-[#bdbdbd] bg-white font-['Noto_Sans',sans-serif]">
      <div className="flex h-[25px] shrink-0 items-center bg-[#ff8c00]">
        <svg className="ml-[4px] h-[17px] w-[64px]" viewBox="0 0 64 17">
          <path d="M2 3Q8-1 14 3Q18 8 13 11.500L10 12.500V16L6 12.500Q-2 10 2 3z" fill="#fff" /><path d="M4 5.500h8.500M3.500 8.500h7" stroke="#ff8c00" strokeWidth="1.200" />
          <text x="21" y="10.800" fontFamily="Noto Sans" fontWeight="bold" fontSize="13" letterSpacing="-1.300" fill="#ff8c00" stroke="#fff" strokeWidth="4.500" strokeLinejoin="round" paintOrder="stroke">skype</text>
        </svg>
        <svg className="ml-[178px] h-4 w-4" viewBox="0 0 16 16"><circle cx="8" cy="8" r="8" fill="#fff" /><path d="M5.800 5.500l4.500 4.500M10.300 5.500L5.800 10" stroke="#111" strokeWidth="2" /></svg>
      </div>
      <div className="h-[25px] shrink-0 pl-[6px] text-[11px] leading-[24px] tracking-[-0.45px] whitespace-nowrap text-[#444]"><b>ritu sinha</b>: usse fir se kisi bande pe crush hua hai</div>
      <div className="flex-1 bg-[#ff8c00]" />
    </div>
  );
}

export default function App() {
  return (
    <div className="relative flex h-[900px] w-[1600px] flex-col overflow-hidden bg-[#454f52]">
      <TopPanel />
      <div className="flex h-[876px] shrink-0">
        <Launcher />
        <Chrome />
      </div>
      <RemoteWindow />
      <SkypePopup />
    </div>
  );
}
